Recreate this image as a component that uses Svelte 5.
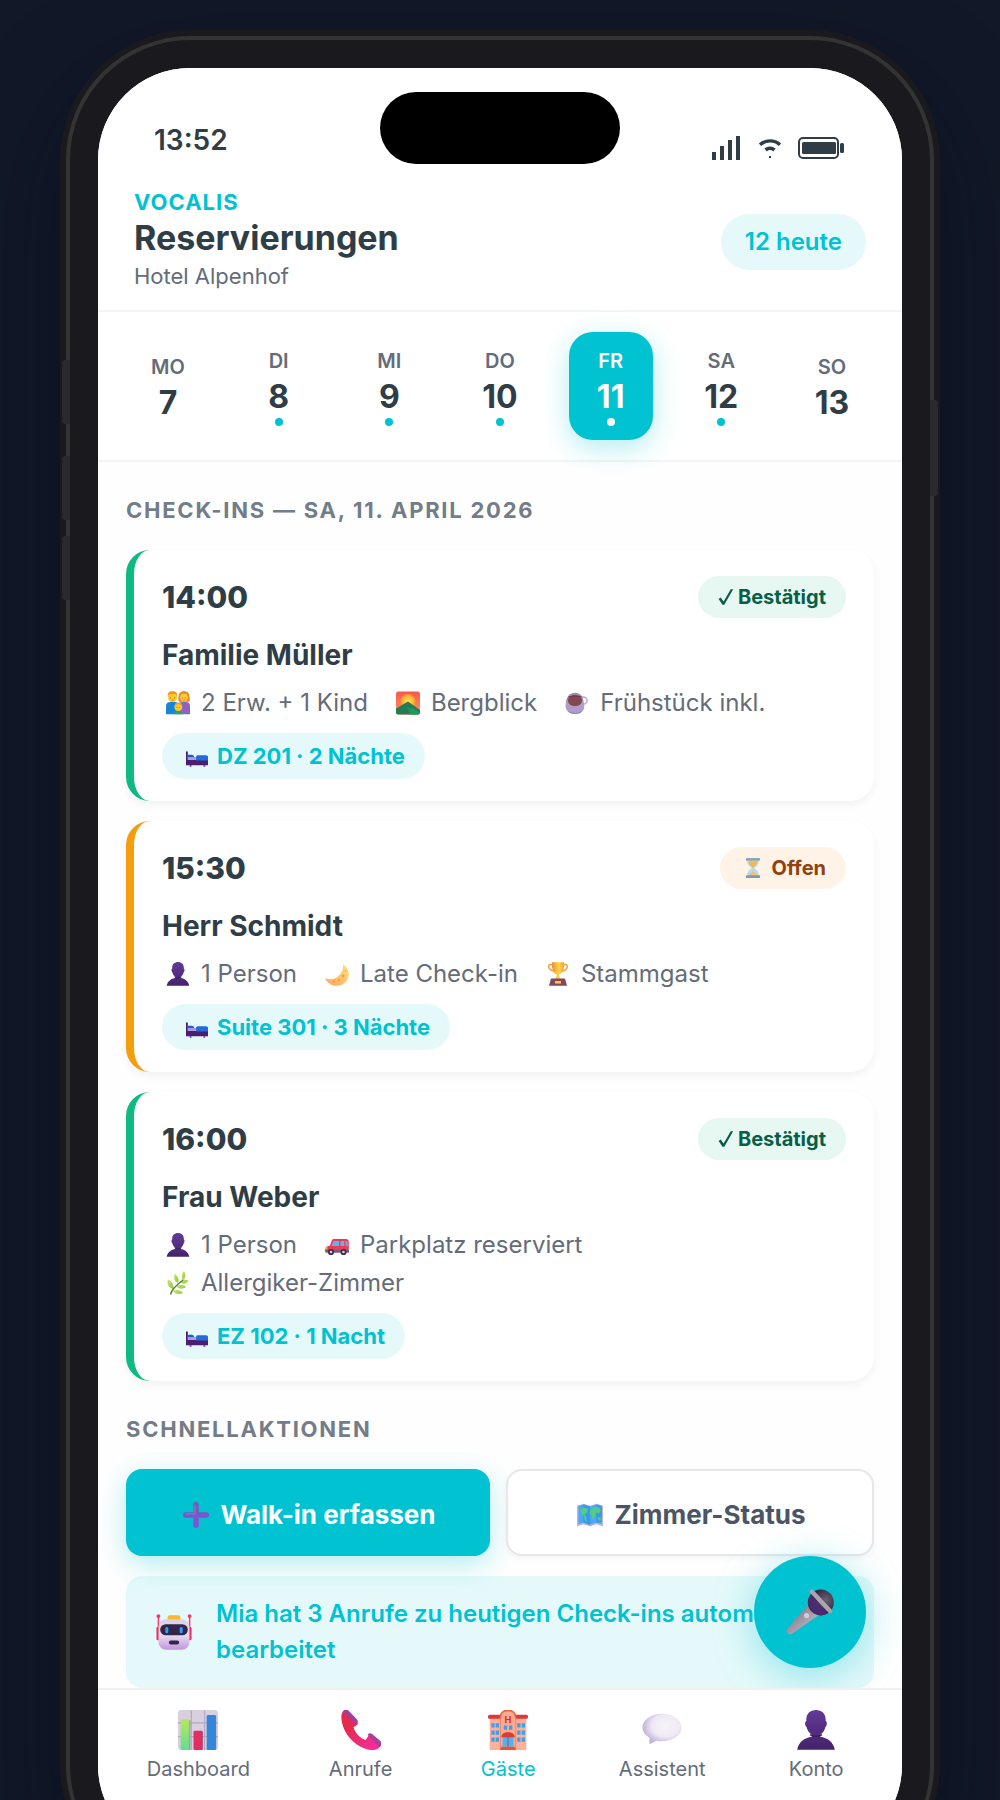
<script lang="ts">
  type Meta = { icon: string; text: string };
  type Booking = {
    time: string;
    name: string;
    status: 'confirmed' | 'open';
    meta: Meta[];
    room: string;
  };

  const days = [
    { name: 'MO', num: 7, dot: false },
    { name: 'DI', num: 8, dot: true },
    { name: 'MI', num: 9, dot: true },
    { name: 'DO', num: 10, dot: true },
    { name: 'FR', num: 11, dot: true },
    { name: 'SA', num: 12, dot: true },
    { name: 'SO', num: 13, dot: false },
  ];

  const bookings: Booking[] = [
    {
      time: '14:00',
      name: 'Familie Müller',
      status: 'confirmed',
      meta: [
        { icon: 'family', text: '2 Erw. + 1 Kind' },
        { icon: 'sunrise', text: 'Bergblick' },
        { icon: 'coffee', text: 'Frühstück inkl.' },
      ],
      room: 'DZ 201 · 2 Nächte',
    },
    {
      time: '15:30',
      name: 'Herr Schmidt',
      status: 'open',
      meta: [
        { icon: 'person', text: '1 Person' },
        { icon: 'moon', text: 'Late Check-in' },
        { icon: 'trophy', text: 'Stammgast' },
      ],
      room: 'Suite 301 · 3 Nächte',
    },
    {
      time: '16:00',
      name: 'Frau Weber',
      status: 'confirmed',
      meta: [
        { icon: 'person', text: '1 Person' },
        { icon: 'car', text: 'Parkplatz reserviert' },
        { icon: 'herb', text: 'Allergiker-Zimmer' },
      ],
      room: 'EZ 102 · 1 Nacht',
    },
  ];

  const tabs = [
    { id: 'dashboard', icon: 'chart', label: 'Dashboard' },
    { id: 'anrufe', icon: 'phone', label: 'Anrufe' },
    { id: 'gaeste', icon: 'hotel', label: 'Gäste' },
    { id: 'assistent', icon: 'bubble', label: 'Assistent' },
    { id: 'konto', icon: 'person', label: 'Konto' },
  ];

  let selectedDay = $state(11);
  let activeTab = $state('gaeste');
</script>

<svelte:head>
  <title>Reservierungen</title>
</svelte:head>

{#snippet icon(name: string)}
  <svg class="icon" viewBox="0 0 24 24" aria-hidden="true"><use href="#i-{name}" /></svg>
{/snippet}

<!-- icon sprite -->
<svg class="sprite" width="0" height="0" aria-hidden="true">
  <defs>
    <linearGradient id="g-purple" x1="0" y1="0" x2="0" y2="1">
      <stop offset="0" stop-color="#633a97" /><stop offset="1" stop-color="#45226b" />
    </linearGradient>
    <linearGradient id="g-sky" x1="0" y1="0" x2="0" y2="1">
      <stop offset="0" stop-color="#f4574f" /><stop offset="1" stop-color="#ff9a5c" />
    </linearGradient>
    <radialGradient id="g-sun">
      <stop offset="0" stop-color="#ffe45c" /><stop offset="1" stop-color="#ffb02e" />
    </radialGradient>
    <linearGradient id="g-moon" x1="1" y1="0" x2="0" y2="1">
      <stop offset="0" stop-color="#ffe37a" /><stop offset="1" stop-color="#ffa45c" />
    </linearGradient>
    <linearGradient id="g-gold" x1="0" y1="0" x2="1" y2="0">
      <stop offset="0" stop-color="#f08c2b" /><stop offset="0.6" stop-color="#ffd84a" /><stop offset="1" stop-color="#f39a34" />
    </linearGradient>
    <linearGradient id="g-leaf" x1="0" y1="0" x2="1" y2="1">
      <stop offset="0" stop-color="#c3ea62" /><stop offset="1" stop-color="#8fc84a" />
    </linearGradient>
    <linearGradient id="g-plus" x1="0" y1="0" x2="0" y2="1">
      <stop offset="0" stop-color="#6a62b4" /><stop offset="1" stop-color="#8a4be0" />
    </linearGradient>
    <linearGradient id="g-robot" x1="0" y1="0" x2="0" y2="1">
      <stop offset="0" stop-color="#d9d0e2" /><stop offset="0.5" stop-color="#eadff0" /><stop offset="1" stop-color="#c196dd" />
    </linearGradient>
    <linearGradient id="g-phone" x1="0" y1="0" x2="1" y2="1">
      <stop offset="0.3" stop-color="#e52a4f" /><stop offset="1" stop-color="#fa2ba8" />
    </linearGradient>
    <linearGradient id="g-green" x1="0" y1="0" x2="0" y2="1">
      <stop offset="0" stop-color="#b6ea5c" /><stop offset="1" stop-color="#62dd93" />
    </linearGradient>
    <radialGradient id="g-bubble" cx="0.6" cy="0.4" r="0.6">
      <stop offset="0" stop-color="#f7f4f9" /><stop offset="0.6" stop-color="#efe9f5" /><stop offset="1" stop-color="#c1b3da" />
    </radialGradient>
    <linearGradient id="g-handle" x1="0" y1="0" x2="1" y2="1">
      <stop offset="0.2" stop-color="#7f7886" /><stop offset="0.7" stop-color="#b5adbb" />
    </linearGradient>
    <radialGradient id="g-mic" cx="0.7" cy="0.4">
      <stop offset="0" stop-color="#6a6073" /><stop offset="1" stop-color="#32263d" />
    </radialGradient>

    <symbol id="i-check" viewBox="0 0 24 24">
      <path d="M.8 14.500 3.600 12.800 7.500 18 17 1.800h3.200L8.400 22.300H6z" fill="currentColor" />
    </symbol>

    <symbol id="i-family" viewBox="0 0 24 24">
      <path d="M0 23.300V15c0-2.600 1.600-4 4-4h5c2 0 3.500 1.300 3.500 4v8.300z" fill="#1687d8" />
      <path d="M12 23.300V15c0-2.600 1.500-4 4-4h4c2.500 0 4 1.400 4 4v8.300z" fill="#8f62bd" />
      <path d="M12.500 5.500a5.500 5.500 0 0 1 11 0c0 2.500.7 3.500 0 5.200H13c-1.200-1.700-.5-3-.5-5.200z" fill="#e48a2c" />
      <circle cx="18" cy="6.300" r="3.900" fill="#ffc936" />
      <rect x="2" y="1" width="9" height="10" rx="4.300" fill="#ffc62e" />
      <path d="M1.800 5c-.3-3 1-4.800 4.700-4.800S11.500 2 11 5L9.500 3h-6z" fill="#e99a24" />
      <path d="M8 23.300c0-2.500 1-4 4-4s4.500 1.500 4.500 4z" fill="#25a567" />
      <circle cx="12.300" cy="16" r="3.900" fill="#ffc72f" />
      <path d="M8.500 15c.2-2.500 1.700-3.600 3.800-3.600s3.700 1.100 3.900 3.600L12.300 13z" fill="#ee9e27" />
      <path d="M4.500 6.500v.8M8.500 6.500v.8M16.500 6.500v.8M19.500 6.500v.8M11 16v.6M13.600 16v.6" stroke="#8a4f1d" stroke-width=".8" />
      <path d="M5.500 9h2M17.200 9h1.800" stroke="#c45a24" stroke-width=".7" />
    </symbol>

    <symbol id="i-sunrise" viewBox="0 0 24 24">
      <rect y="0.500" width="24" height="23" rx="2.500" fill="url(#g-sky)" />
      <circle cx="12" cy="10.500" r="7.500" fill="#ff9a3c" />
      <circle cx="12" cy="10.500" r="6" fill="url(#g-sun)" />
      <path d="M0 17.500 12 10.500l12 8.500v2.500a2 2 0 0 1-2 2H2a2 2 0 0 1-2-2z" fill="#257b56" />
      <path d="M11 15.500l3 2 2-.8 8 4.800a2 2 0 0 1-2 2H14z" fill="#1e9a5c" />
    </symbol>

    <symbol id="i-coffee" viewBox="0 0 24 24">
      <circle cx="18.500" cy="9.500" r="3.600" fill="none" stroke="#b7a9cd" stroke-width="1.500" />
      <path d="M1 10C1 3 18.500 3 18.500 10l.8 5c0 4.500-3 8-9 8S.5 19.500.5 15z" fill="#b09cc9" />
      <path d="M3.500 20.500c3 2.500 10 2.500 13 0" stroke="#8f7fb2" fill="none" />
      <ellipse cx="10" cy="8.500" rx="8" ry="6.700" fill="#9d8ba8" />
      <ellipse cx="10" cy="9.500" rx="7" ry="5.500" fill="#83494e" />
      <path d="M3.500 6c4-1.200 9-1.200 13 0" stroke="#6d3c46" stroke-width="1.200" fill="none" />
    </symbol>

    <symbol id="i-bed" viewBox="0 0 24 24">
      <path d="M4 21h2v3H4zM19 21h2v3h-2z" fill="#8e5bd0" />
      <path d="M0 7.500C0 6.500 2 6.500 2 7.500V16h22v6H0z" fill="#4a1f6e" />
      <path d="M2 10.500h4c2 0 3 1 3 3H2z" fill="#1b5fc4" />
      <path d="M2 13h8c1 0 1.500.7 1.500 1.500V16H2z" fill="#a895e8" />
      <path d="M11 13c0-1 .7-1.800 1.800-1.800h9c1.400 0 2.200.8 2.200 2V17H11z" fill="#246bdb" />
    </symbol>

    <symbol id="i-person" viewBox="0 0 24 24">
      <path d="M12 0c3.500 0 5.800 2.200 5.800 5.600v1c.9.2 1 3 0 3.300-.5 2.200-1.800 4-3.300 5V16c4.500.6 8 3.200 8.800 7.800H.7C1.500 19.200 5 16.600 9.500 16v-1.100c-1.500-1-2.800-2.800-3.300-5-1-.3-.9-3.100 0-3.300v-1C6.200 2.200 8.500 0 12 0z" fill="url(#g-purple)" />
      <path d="M8.500 14.800c2 1.500 5 1.500 7 0" stroke="#3d1d63" stroke-width="1" fill="none" />
    </symbol>

    <symbol id="i-moon" viewBox="0 0 24 24">
      <path d="M18 2.200c5.500 3.300 7.500 10.500 4 16-4 6.200-12.500 7.500-18 3-2-1.700-3.200-3.500-3.700-5 4.700 2.300 10.300 1 13.700-2.700 3.300-3.500 4.500-7.300 4-11.300z" fill="url(#g-moon)" />
      <circle cx="18" cy="14" r="1.400" fill="#f0a04a" /><circle cx="14" cy="18" r="1.100" fill="#f09a48" />
      <circle cx="20.500" cy="9" r=".8" fill="#f0a84f" /><circle cx="9" cy="19.500" r=".9" fill="#f08e48" />
    </symbol>

    <symbol id="i-trophy" viewBox="0 0 24 24">
      <path d="M6.500 2.500H4.500C1.500 2.500 2 8.500 8 9M17.500 2.500h2c3 0 2.500 6-3.500 6.500" fill="none" stroke="#efa13a" stroke-width="1.500" />
      <path d="M6 .3h12c.5 6-1 10.700-4.500 12l-.3 1.700 1.300 3h-5l1.300-3-.3-1.700C7 11 5.500 6.300 6 .3z" fill="url(#g-gold)" />
      <path d="M5 16.500h14l2 7.200H3z" fill="#86465c" />
      <rect x="9" y="19" width="6" height="2.600" fill="#f6c34d" />
    </symbol>

    <symbol id="i-hourglass" viewBox="0 0 24 24">
      <path d="M5 3c0 5 2.500 6.500 5.500 9C7.500 14.500 5 16 5 21h14c0-5-2.500-6.500-5.500-9C16.500 9.500 19 8 19 3z" fill="#b5d9f7" />
      <path d="M6.500 4c.5 4 3 5.500 5.500 8 2.500-2.500 5-4 5.500-8z" fill="#f3b74c" />
      <path d="M12 13l1 4c2 .5 3.500 1.500 4.500 4h-11c1-2.500 2.500-3.500 4.500-4z" fill="#f5c36b" />
      <rect x="3.500" width="17" height="3.200" rx="1" fill="#8fa3b3" />
      <rect x="3.500" y="20.800" width="17" height="3.200" rx="1" fill="#8297a9" />
    </symbol>

    <symbol id="i-car" viewBox="0 0 24 24">
      <path d="M8 6h13c1.800 0 2.800 1 2.800 3v10.500H1c-1-1.500-1.200-4.500.5-5.700L5 12.500 7 7z" fill="#ec3b55" />
      <path d="M8.500 8H14v5H6.500zM15.500 8h3.700v5h-3.700zM20.500 8h1.800l.7 5h-2.500z" fill="#63b3f3" />
      <path d="M0 17h24v2.500H.5z" fill="#6c6379" />
      <circle cx="6" cy="19" r="3.100" fill="#3e2c52" /><circle cx="6" cy="19" r="1.300" fill="#d5cde0" />
      <circle cx="18.500" cy="19" r="3.100" fill="#3e2c52" /><circle cx="18.500" cy="19" r="1.300" fill="#d5cde0" />
      <rect x=".3" y="14" width="2" height="2.300" fill="#ffc83d" />
    </symbol>

    <symbol id="i-herb" viewBox="0 0 24 24">
      <g fill="url(#g-leaf)">
        <path d="M17 9.500c-2-3.500-1-7.500 1-9.500 2 3 1.700 7-1 9.500z" />
        <path d="M12 12c-4-1.500-4.500-5.500-3.500-9 3.500 2 5 5.500 3.500 9z" />
        <path d="M7.500 18C2 17 .5 12 2 8.500c4 1.500 6 5.500 5.500 9.500z" />
        <path d="M14 11.500c2-3 5.500-3.500 8.500-2-2 3.500-5.500 4-8.500 2z" />
        <path d="M10.500 15.500c3-2.500 7-2 9.500.5-3.500 2.500-7 2-9.500-.5z" />
        <path d="M7 20c3.500-2 8-1 10 2-4 1.700-8 1-10-2z" />
      </g>
      <path d="M4.500 23.500c1.500-5 4.500-8 12.500-14.500" stroke="#597a2f" stroke-width="1.400" fill="none" />
    </symbol>

    <symbol id="i-plus" viewBox="0 0 24 24">
      <rect x="9.500" width="5" height="24" rx="2.500" fill="url(#g-plus)" />
      <rect y="9.500" width="24" height="5" rx="2.500" fill="url(#g-plus)" />
      <path d="M11 2.500v8.500H2.500" stroke="#9a7fc4" stroke-width=".8" fill="none" />
    </symbol>

    <symbol id="i-map" viewBox="0 0 24 24">
      <path d="M0 3.500 6 1.500l6 2 6-2 6 2v19l-6-2-6 2-6-2-6 2z" fill="#c3b2dc" />
      <path d="M1.300 3.700 6 2.200l6 2 6-2 4.700 1.500v16.800L18 19l-6 2-6-2-4.700 1.500z" fill="#4aa8f8" />
      <path d="M6 2v17.200l6 2V4.200zM18 2v17l5-.5V4z" fill="#2f8de6" opacity=".6" />
      <path d="M3 6.500l3-1.500 4 1-.5 3.500L7 11.500 8.500 14 9 19l-2-2.500-.5-4L3.500 10zM12.500 7l4-2.500 4 .5 1.500 3-2 2.500-3-1-.5 5-1.500 2-1.500-4-2-2zM19 14h3v2.500l-2 1z" fill="#50cf83" />
    </symbol>

    <symbol id="i-robot" viewBox="0 0 24 24">
      <path d="M1.600 1.500V9M22.400 1.500V9" stroke="#f23f6d" stroke-width="1" />
      <circle cx="1.600" cy="1.400" r="1.300" fill="#f5376a" /><circle cx="22.400" cy="1.400" r="1.300" fill="#f5376a" />
      <rect x=".3" y="8.500" width="3" height="9" rx="1" fill="#ec2f62" />
      <rect x="20.700" y="8.500" width="3" height="9" rx="1" fill="#ec2f62" />
      <rect x="7.700" y=".8" width="8.600" height="4" rx="1.500" fill="#f7b72e" />
      <rect x="1.700" y="3.500" width="20.600" height="20.300" rx="5" fill="url(#g-robot)" />
      <rect x="2.800" y="6.800" width="18.400" height="7.400" rx="3.700" fill="#33264a" />
      <rect x="6.200" y="8.600" width="2" height="4.200" rx="1" fill="#2ba4f7" />
      <rect x="15.800" y="8.600" width="2" height="4.200" rx="1" fill="#2ba4f7" />
      <rect x="8.600" y="17.600" width="6.800" height="2.800" rx="1.200" fill="#33264a" />
    </symbol>

    <symbol id="i-chart" viewBox="0 0 24 24">
      <rect width="24" height="24" rx="2" fill="#d8d0df" />
      <path d="M8 0v24M16 0v24M0 7.700h24M0 16h24" stroke="#b3a8be" stroke-width=".7" />
      <rect x="1.600" y="5.500" width="5.500" height="18.500" rx=".8" fill="url(#g-green)" />
      <rect x="9.300" y="12.500" width="5.500" height="11.500" rx=".8" fill="#e22c62" />
      <rect x="17.200" y="3" width="5.500" height="21" rx=".8" fill="#3287da" />
      <path d="M7.100 6v18M14.800 13v11M22.700 3.500V24" stroke="#5d4a78" stroke-width=".5" opacity=".5" />
    </symbol>

    <symbol id="i-phone" viewBox="0 0 24 24">
      <path d="M2.500-.3 9.800 7c.6.700.3 1.600-.5 2.100L7.500 10.300c1 3.500 4 6.700 7.300 7.700l1.500-2.300c.5-.8 1.600-1 2.300-.5l5 4.300c.6.600.6 1.500.1 2.200-1.200 1.700-3 2.300-5.200 2.300C9.500 23.500.3 14 .2 4.200c0-2 .7-3.500 2.300-4.500z" fill="url(#g-phone)" />
      <path d="M2.300-.3c.8-.3 1.500 0 2 .5l5.200 5.400c.7.700.7 1.500.2 2L8.800 8.600 1.600 1.300C1.300.6 1.800-.1 2.300-.3z" fill="#a83f96" />
      <path d="M16 14.800c.7-.9 1.500-1 2.500-.5l5 4.200c.8.800.8 2 .2 3l-.7.700z" fill="#a2429c" />
    </symbol>

    <symbol id="i-hotel" viewBox="0 0 24 24">
      <rect x="1" y="4" width="22" height="20" fill="#fdb09a" />
      <rect y="2.800" width="24" height="2.500" rx="1" fill="#dc3a3a" />
      <path d="M7.400 24V4.500C7.400 1.800 9.300.2 12 .2s4.600 1.600 4.600 4.300V24z" fill="#ffab8f" stroke="#ee7a5f" stroke-width=".5" />
      <path d="M7.400 4.500C7.400 1.800 9.300.2 12 .2s4.600 1.600 4.600 4.300" fill="none" stroke="#f0623f" stroke-width="1" />
      <text x="12" y="7.500" text-anchor="middle" font-size="5.500" font-weight="700" fill="#e0243f">H</text>
      <g fill="#3f9fe8">
        <path d="M2 8h2v2.500H2zM4.600 8h2v2.500h-2zM2 12.300h2v2.500H2zM4.600 12.300h2v2.500h-2zM2 16.500h2V19H2zM4.600 16.500h2V19h-2z" />
        <path d="M17.500 8h2v2.500h-2zM20.200 8h2v2.500h-2zM17.500 12.300h2v2.500h-2zM20.200 12.300h2v2.500h-2zM17.500 16.500h2V19h-2zM20.200 16.500h2V19h-2z" />
        <path d="M9.500 9.300h2v2.500h-2zM12.600 9.300h2v2.500h-2z" />
      </g>
      <rect x="8.700" y="16" width="6.600" height="6" fill="#4eb2f3" />
      <path d="M12 16v6" stroke="#9a5d63" stroke-width=".7" />
      <path d="M8 16.300c0-2 1.700-3 4-3s4 1 4 3z" fill="#d93c30" />
      <path d="M8 22h8l.8 2H7.200z" fill="#e5533a" />
    </symbol>

    <symbol id="i-bubble" viewBox="0 0 24 24">
      <path d="M12 2.300c6.500 0 11.700 3.700 11.700 8.200S18.500 18.700 12 18.700c-1.200 0-2.300-.1-3.300-.3L4.500 20.500v-3.900C1.900 15.100.3 12.900.3 10.500.3 6 5.500 2.300 12 2.300z" fill="url(#g-bubble)" />
    </symbol>

    <symbol id="i-mic" viewBox="0 0 24 24">
      <path d="M11 8.500l5 5.300L3.200 22.800C1.500 24-.5 22.200.5 20.500z" fill="url(#g-handle)" />
      <circle cx="17.400" cy="7.200" r="6.500" fill="url(#g-mic)" />
      <path d="M12.200 3.500a6.500 6.500 0 0 0 8.500 9.300z" fill="#4b2a70" />
      <path d="M13 1.900 22 11.500" stroke="#aaa3b0" stroke-width="2.300" stroke-linecap="round" />
      <circle cx="10.300" cy="13.800" r="1.300" fill="#d3ccd8" />
    </symbol>
  </defs>
</svg>

<main class="stage">
  <div class="phone">
    <span class="key key-1"></span>
    <span class="key key-2"></span>
    <span class="key key-3"></span>
    <span class="key key-power"></span>

    <div class="screen">
      <div class="island"></div>

      <div class="status-bar">
        <span class="clock">13:52</span>
        <div class="signals">
          <svg width="28" height="24" viewBox="0 0 28 24" fill="currentColor" aria-hidden="true">
            <rect y="16" width="4" height="8" /><rect x="8" y="10" width="4" height="14" />
            <rect x="16" y="4" width="4" height="20" /><rect x="24" width="4" height="24" />
          </svg>
          <svg width="24" height="24" viewBox="0 0 24 24" fill="none" stroke="currentColor" aria-hidden="true">
            <path d="M3 8.700C8.500 3.600 17.500 3.600 23 8.700" stroke-width="3.400" />
            <path d="M8.600 13.900c2.500-2 6.300-2 8.800 0" stroke-width="3.800" />
            <rect x="12" y="20" width="2" height="2" fill="currentColor" stroke="none" />
          </svg>
          <svg width="46" height="24" viewBox="0 0 46 24" fill="none" aria-hidden="true">
            <rect x="1" y="2" width="39" height="20" rx="4" stroke="currentColor" stroke-width="2" />
            <rect x="4" y="6" width="34" height="12" rx="1.500" fill="currentColor" />
            <rect x="42" y="7" width="4" height="10" rx="1.500" fill="currentColor" />
          </svg>
        </div>
      </div>

      <header class="header">
        <div class="titles">
          <div class="brand">VOCALIS</div>
          <h1>Reservierungen</h1>
          <p class="hotel">Hotel Alpenhof</p>
        </div>
        <span class="count">12 heute</span>
      </header>

      <div class="days">
        {#each days as day}
          <button class="day" class:active={day.num === selectedDay} onclick={() => (selectedDay = day.num)}>
            <span class="day-name">{day.name}</span>
            <span class="day-num">{day.num}</span>
            {#if day.dot}<span class="dot"></span>{/if}
          </button>
        {/each}
      </div>

      <section class="content">
        <h2>CHECK-INS — SA, 11. APRIL 2026</h2>
        <div class="cards">
          {#each bookings as b}
            <article class="card {b.status}">
              <div class="card-head">
                <span class="time">{b.time}</span>
                {#if b.status === 'confirmed'}
                  <span class="badge">{@render icon('check')}Bestätigt</span>
                {:else}
                  <span class="badge">{@render icon('hourglass')}Offen</span>
                {/if}
              </div>
              <h3>{b.name}</h3>
              <div class="meta">
                {#each b.meta as m}
                  <span class="meta-item">{@render icon(m.icon)}{m.text}</span>
                {/each}
              </div>
              <span class="room">{@render icon('bed')}{b.room}</span>
            </article>
          {/each}
        </div>

        <h2>SCHNELLAKTIONEN</h2>
        <div class="actions">
          <button class="action primary">{@render icon('plus')}Walk-in erfassen</button>
          <button class="action">{@render icon('map')}Zimmer-Status</button>
        </div>

        <div class="banner">
          {@render icon('robot')}
          <p>Mia hat 3 Anrufe zu heutigen Check-ins automatisch bearbeitet</p>
        </div>
      </section>

      <div class="footer">
        <button class="fab" aria-label="Spracheingabe">{@render icon('mic')}</button>
        <nav class="tabs">
          {#each tabs as tab}
            <a
              href="#{tab.id}"
              class="tab"
              class:active={tab.id === activeTab}
              onclick={() => (activeTab = tab.id)}
            >
              {@render icon(tab.icon)}
              <span>{tab.label}</span>
            </a>
          {/each}
        </nav>
      </div>
    </div>
  </div>
</main>

<style>
  :global(body) {
    margin: 0;
    background: #111827;
    font-family: Inter, 'Liberation Sans', sans-serif;
  }

  h1, h2, h3, p { margin: 0; }

  button {
    font-family: inherit;
    border: none;
    background: none;
    cursor: pointer;
  }

  .sprite { position: absolute; }

  .icon {
    display: block;
    flex: none;
    width: 24px;
    height: 24px;
    overflow: visible;
  }

  .stage {
    box-sizing: border-box;
    height: 100vh;
    overflow: hidden;
    padding: 40px;
    display: flex;
    justify-content: center;
    align-items: flex-start;
  }

  .phone {
    position: relative;
    box-sizing: border-box;
    width: 100%;
    max-width: 860px;
    padding: 28px;
    border-radius: 120px;
    background: #1a1a1e;
    box-shadow:
      0 0 0 4px #333333,
      0 0 0 10px #1a1a1e,
      0 40px 100px rgba(0, 10, 30, 0.5);
  }

  .key {
    position: absolute;
    left: -8px;
    width: 8px;
    height: 64px;
    border-radius: 4px 0 0 4px;
    background: #2a2a2e;
  }
  .key-1 { top: 320px; }
  .key-2 { top: 416px; }
  .key-3 { top: 496px; }
  .key-power {
    left: auto;
    right: -8px;
    top: 360px;
    height: 96px;
    border-radius: 0 4px 4px 0;
  }

  .screen {
    position: relative;
    overflow: hidden;
    border-radius: 92px;
    background: #fefefe;
    color: #2f3e46;
  }

  .island {
    position: absolute;
    top: 24px;
    left: 50%;
    width: 240px;
    height: 72px;
    margin-left: -120px;
    border-radius: 36px;
    background: #000;
  }

  .status-bar {
    display: flex;
    justify-content: space-between;
    align-items: flex-end;
    padding: 52px 58px 28px 56px;
    background: #fff;
  }
  .clock {
    font-size: 28px;
    line-height: 40px;
    font-weight: 600;
  }
  .signals {
    display: flex;
    gap: 17px;
  }
  .signals svg { display: block; }

  .header {
    display: flex;
    justify-content: space-between;
    align-items: center;
    padding: 0 36px 14px;
    border-bottom: 2px solid #f3f4f6;
    background: #fff;
  }
  .titles { padding-bottom: 4px; }
  .brand {
    font-size: 22px;
    line-height: 28px;
    font-weight: 700;
    letter-spacing: 1px;
    color: #00c2d1;
  }
  h1 {
    font-size: 34px;
    line-height: 44px;
    font-weight: 700;
  }
  .hotel {
    font-size: 22px;
    line-height: 32px;
    color: #646c7a;
  }
  .count {
    padding: 0 24px;
    border-radius: 28px;
    background: #e5f9fa;
    color: #00c2d1;
    font-size: 24px;
    line-height: 56px;
    font-weight: 600;
  }

  .days {
    display: flex;
    justify-content: space-between;
    align-items: center;
    padding: 20px 28px;
    border-bottom: 2px solid #f3f4f6;
    background: #fff;
  }
  .day {
    display: flex;
    flex-direction: column;
    align-items: center;
    gap: 4px;
    width: 84px;
    padding: 15px 0 14px;
    border-radius: 24px;
    color: #2f3e46;
  }
  .day-name {
    font-size: 20px;
    line-height: 28px;
    font-weight: 600;
    color: #646c7a;
  }
  .day-num {
    font-size: 32px;
    line-height: 35px;
    font-weight: 700;
  }
  .dot {
    width: 8px;
    height: 8px;
    border-radius: 50%;
    background: #00c2d1;
  }
  .day.active {
    background: #00c2d1;
    color: #fff;
    box-shadow: 0 8px 28px rgba(0, 194, 209, 0.3);
  }
  .day.active .day-name { color: #fff; }
  .day.active .dot { background: #fff; }

  .content { padding: 0 28px; }

  h2 {
    margin: 34px 0 26px;
    font-size: 22px;
    line-height: 28px;
    font-weight: 700;
    letter-spacing: 0.08em;
    color: #737c89;
  }

  .cards {
    display: flex;
    flex-direction: column;
    gap: 20px;
  }
  .card {
    padding: 26px 28px 22px;
    border-left: 8px solid #10b981;
    border-radius: 24px;
    background: #fff;
    box-shadow: 0 4px 8px rgba(0, 0, 0, 0.05);
  }
  .card.open { border-left-color: #f59e0b; }
  .card-head {
    display: flex;
    justify-content: space-between;
    align-items: center;
    height: 42px;
    margin-bottom: 18px;
  }
  .time {
    font-size: 30px;
    font-weight: 800;
  }
  .badge {
    display: flex;
    align-items: center;
    padding: 0 20px;
    border-radius: 21px;
    background: #e7f7f2;
    color: #065f46;
    font-size: 20px;
    line-height: 42px;
    font-weight: 700;
  }
  .badge .icon {
    width: 18px;
    height: 18px;
    margin-right: 2px;
  }
  .open .badge {
    background: #fef3e6;
    color: #92400e;
  }
  .open .badge .icon {
    width: 20px;
    height: 20px;
    margin: 0 9px 0 3px;
  }
  h3 {
    margin-bottom: 13px;
    font-size: 28px;
    line-height: 38px;
    font-weight: 700;
  }
  .meta {
    display: flex;
    flex-wrap: wrap;
    gap: 6px 24px;
    margin-bottom: 14px;
    font-size: 24px;
    line-height: 32px;
    color: #646c7a;
  }
  .meta-item {
    display: flex;
    align-items: center;
  }
  .meta-item .icon { margin: 0 11px 0 4px; }
  .room {
    display: flex;
    align-items: center;
    width: fit-content;
    padding: 0 20px;
    border-radius: 23px;
    background: #e5f9fa;
    color: #00c2d1;
    font-size: 22px;
    line-height: 46px;
    font-weight: 700;
  }
  .room .icon {
    width: 22px;
    height: 22px;
    margin: 0 9px 0 4px;
  }

  .actions {
    display: flex;
    gap: 16px;
    margin-bottom: 20px;
  }
  .action {
    flex: 1;
    display: flex;
    justify-content: center;
    align-items: center;
    padding: 26px 16px 21px;
    border: 2px solid #e5e7eb;
    border-radius: 16px;
    background: #fff;
    box-shadow: 0 2px 6px rgba(0, 0, 0, 0.05);
    color: #4b5563;
    font-size: 26px;
    line-height: 36px;
    font-weight: 700;
  }
  .action.primary {
    border: none;
    background: #00c2d1;
    box-shadow: 0 8px 28px rgba(0, 194, 209, 0.3);
    color: #fff;
  }
  .action .icon {
    width: 26px;
    height: 26px;
    margin: 0 11px 0 3px;
  }

  .banner {
    display: flex;
    align-items: center;
    gap: 20px;
    padding: 20px 28px 20px 30px;
    border-radius: 16px;
    background: #e5f9fa;
    color: #00c2d1;
    font-size: 24px;
    line-height: 36px;
    font-weight: 600;
  }
  .banner .icon {
    width: 36px;
    height: 36px;
    margin-right: 4px;
  }

  .footer { position: relative; }
  .fab {
    position: absolute;
    right: 36px;
    bottom: calc(100% + 20px);
    display: flex;
    justify-content: center;
    align-items: center;
    width: 112px;
    height: 112px;
    padding: 0;
    border-radius: 50%;
    background: #00c2d1;
    box-shadow: 0 8px 40px rgba(0, 194, 209, 0.4);
  }
  .fab .icon {
    width: 48px;
    height: 48px;
  }

  .tabs {
    position: relative;
    display: flex;
    justify-content: space-around;
    padding: 20px 12px 74px;
    border-top: 2px solid #f0f0f2;
    background: #fff;
  }
  .tab {
    display: flex;
    flex-direction: column;
    align-items: center;
    gap: 5px;
    min-width: 74px;
    color: #646c7a;
    font-size: 20px;
    line-height: 28px;
    text-decoration: none;
  }
  .tab .icon {
    width: 40px;
    height: 40px;
  }
  .tab.active { color: #00c2d1; }
</style>
